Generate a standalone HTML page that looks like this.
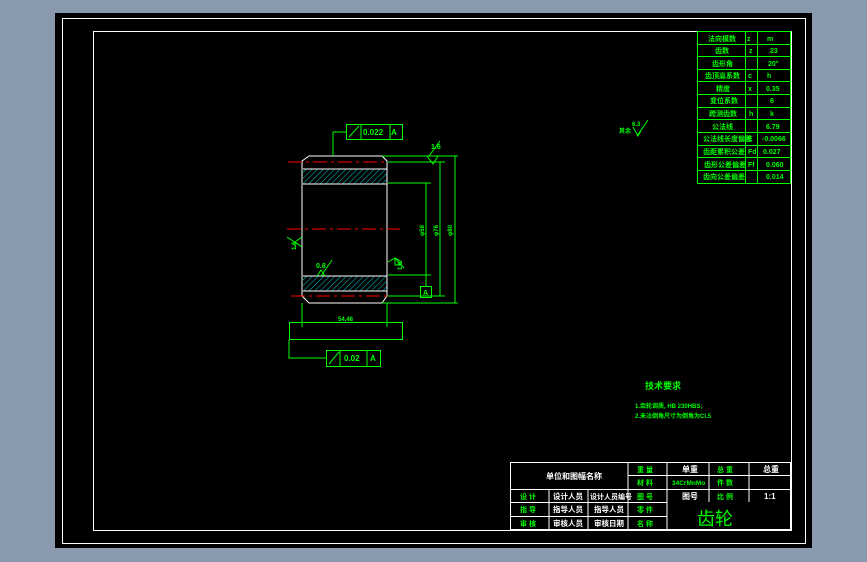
<!DOCTYPE html><html><head><style>body{margin:0;background:#8a9aae}svg{display:block}text{font-family:"Liberation Sans","Noto Sans CJK SC",sans-serif;fill:#00ff00;font-weight:bold}</style></head><body>
<svg width="867" height="562" xmlns="http://www.w3.org/2000/svg">
<defs><pattern id="h" width="4" height="4" patternUnits="userSpaceOnUse" patternTransform="rotate(45)"><line x1="0" y1="0" x2="0" y2="4" stroke="#00c8d8" stroke-width="1"/></pattern></defs>
<rect x="55" y="13" width="757" height="535" fill="#000"/>
<rect x="62.5" y="18.5" width="743" height="525" fill="none" stroke="#fff"/>
<rect x="93.5" y="31.5" width="698" height="499" fill="none" stroke="#fff"/>
<g stroke="#00ff00" fill="none">
<rect x="697.5" y="31.5" width="93" height="152"/>
<line x1="745.5" y1="31" x2="745.5" y2="183"/><line x1="757.5" y1="31" x2="757.5" y2="183"/>
<path d="M697 44.5H791M697 56.5H791M697 69.5H791M697 81.5H791M697 94.5H791M697 107.5H791M697 119.5H791M697 132.5H791M697 145.5H791M697 157.5H791M697 170.5H791"/>
</g>
<g font-size="7">
<text x="708" y="41">法向模数</text><text x="747" y="41">z</text><text x="767" y="41">m</text>
<text x="715" y="53">齿数</text><text x="749" y="53">z</text><text x="770" y="53">23</text>
<text x="712" y="66">齿形角</text><text x="768" y="66">20°</text>
<text x="705" y="78">齿顶高系数</text><text x="748" y="78">c</text><text x="767" y="78">h</text>
<text x="716" y="91">精度</text><text x="748" y="91">x</text><text x="766" y="91">0.35</text>
<text x="710" y="103">变位系数</text><text x="770" y="103">6</text>
<text x="709" y="116">跨测齿数</text><text x="749" y="116">h</text><text x="770" y="116">k</text>
<text x="712" y="129">公法线</text><text x="766" y="129">6.79</text>
<text x="703" y="141">公法线长度偏差</text><text x="748" y="141">E</text><text x="762" y="141">-0.0066</text>
<text x="703" y="154">齿距累积公差</text><text x="748" y="154">Fd</text><text x="763" y="154">0.027</text>
<text x="704" y="167">齿形公差偏差</text><text x="748" y="167">Ff</text><text x="766" y="167">0.060</text>
<text x="703" y="179">齿向公差偏差</text><text x="766" y="179">0.014</text>
</g>
<rect x="303" y="169" width="84" height="15" fill="url(#h)"/>
<rect x="303" y="276" width="84" height="15" fill="url(#h)"/>
<g stroke="#fff" fill="none">
<path d="M309 156H382L387 161V296L382 303H309L302 296V161Z"/>
<path d="M303 169H387M303 184H387M303 276H387M303 291H387"/>
</g>
<g stroke="#f00" stroke-dasharray="14 4 3 4"><line x1="288" y1="162" x2="393" y2="162"/><line x1="287" y1="229" x2="400" y2="229"/><line x1="291" y1="296" x2="398" y2="296"/></g>
<g stroke="#00ff00" fill="none">
<path d="M382 156H458M388 162H445M388 183H431M388 275H431M388 296H445M382 303H458"/>
<path d="M455 156V303M440 162V296M426 183V275"/>
<path d="M302 303V327M387 303V327"/>
<rect x="289.5" y="322.5" width="113" height="17"/>
<path d="M289 340V358H326"/>
<rect x="326.5" y="350.5" width="54" height="16"/><path d="M340 350V366M367 350V366M329 364L339 352"/>
<rect x="346.5" y="124.5" width="56" height="15"/><path d="M361 124V139M390 124V139M349 137L359 126"/>
<path d="M346 132H333V156"/>
<rect x="420.5" y="286.5" width="11" height="11"/><path d="M426 275V286"/>
<path d="M427 156L433 164L438 156M429 156L440 141M633 127L638 136L643 127M637 136L648 120"/>
<path d="M302 247L295 242L302 237M295 242V247M302 247L287 237"/>
<path d="M317 276L321 270L325 276M321 276L332 260"/>
<path d="M388 262L395 258L402 262M395 258L404 268M395 258V265H402"/>
</g>
<g font-size="8"><text x="363" y="135">0.022</text><text x="391" y="135">A</text><text x="344" y="361">0.02</text><text x="370" y="361">A</text>
<text x="431" y="149" font-size="7">1.6</text><text x="316" y="268" font-size="7">0.8</text><text x="338" y="321" font-size="6">54.48</text>
<text x="423" y="295" font-size="7">A</text><text x="619" y="133" font-size="6">其余</text><text x="632" y="126" font-size="6">6.3</text></g>
<g font-size="6">
<text transform="translate(424,236) rotate(-90)">φ58</text>
<text transform="translate(438,236) rotate(-90)">φ76</text>
<text transform="translate(452,236) rotate(-90)">φ80</text>
<text transform="translate(296,250) rotate(-90)">1.6</text>
<text transform="translate(402,270) rotate(-90)">1.6</text>
</g>
<g font-size="9"><text x="645" y="389">技术要求</text></g>
<g font-size="6"><text x="635" y="408">1.齿轮调质, HB 230HBS;</text><text x="635" y="418">2.未注倒角尺寸为倒角为CI.5</text></g>
<g stroke="#fff" fill="none">
<rect x="510.5" y="462.5" width="280" height="67"/>
<path d="M510 489.5H791M510 502.5H667M510 516.5H628M628 475.5H791M628 462V530M667 462V530M709 462V502M749 462V502M549 489V530M588 489V530M628 516.5H667"/>
</g>
<g font-size="8">
<text x="546" y="479" style="fill:#fff">单位和图幅名称</text>
<text x="553" y="499" style="fill:#fff" font-size="7.5">设计人员</text><text x="590" y="499" style="fill:#fff" font-size="7">设计人员编号</text>
<text x="553" y="512" style="fill:#fff" font-size="7.5">指导人员</text><text x="594" y="512" style="fill:#fff" font-size="7.5">指导人员</text>
<text x="553" y="526" style="fill:#fff" font-size="7.5">审核人员</text><text x="594" y="526" style="fill:#fff" font-size="7.5">审核日期</text>
<text x="682" y="472" style="fill:#fff">单重</text><text x="763" y="472" style="fill:#fff">总重</text>
<text x="682" y="499" style="fill:#fff">图号</text><text x="764" y="499" style="fill:#fff">1:1</text>
</g>
<g font-size="7">
<text x="520" y="499">设 计</text><text x="520" y="512">指 导</text><text x="520" y="526">审 核</text>
<text x="637" y="472">重 量</text><text x="637" y="485">材 料</text><text x="637" y="499">图 号</text>
<text x="637" y="512">零 件</text><text x="637" y="526">名 称</text>
<text x="717" y="472">总 重</text><text x="717" y="485">件 数</text><text x="717" y="499">比 例</text>
<text x="672" y="485" font-size="6.5">34CrMnMo</text></g>
<text x="697" y="525" font-size="18" style="font-weight:normal">齿轮</text>
</svg></body></html>
